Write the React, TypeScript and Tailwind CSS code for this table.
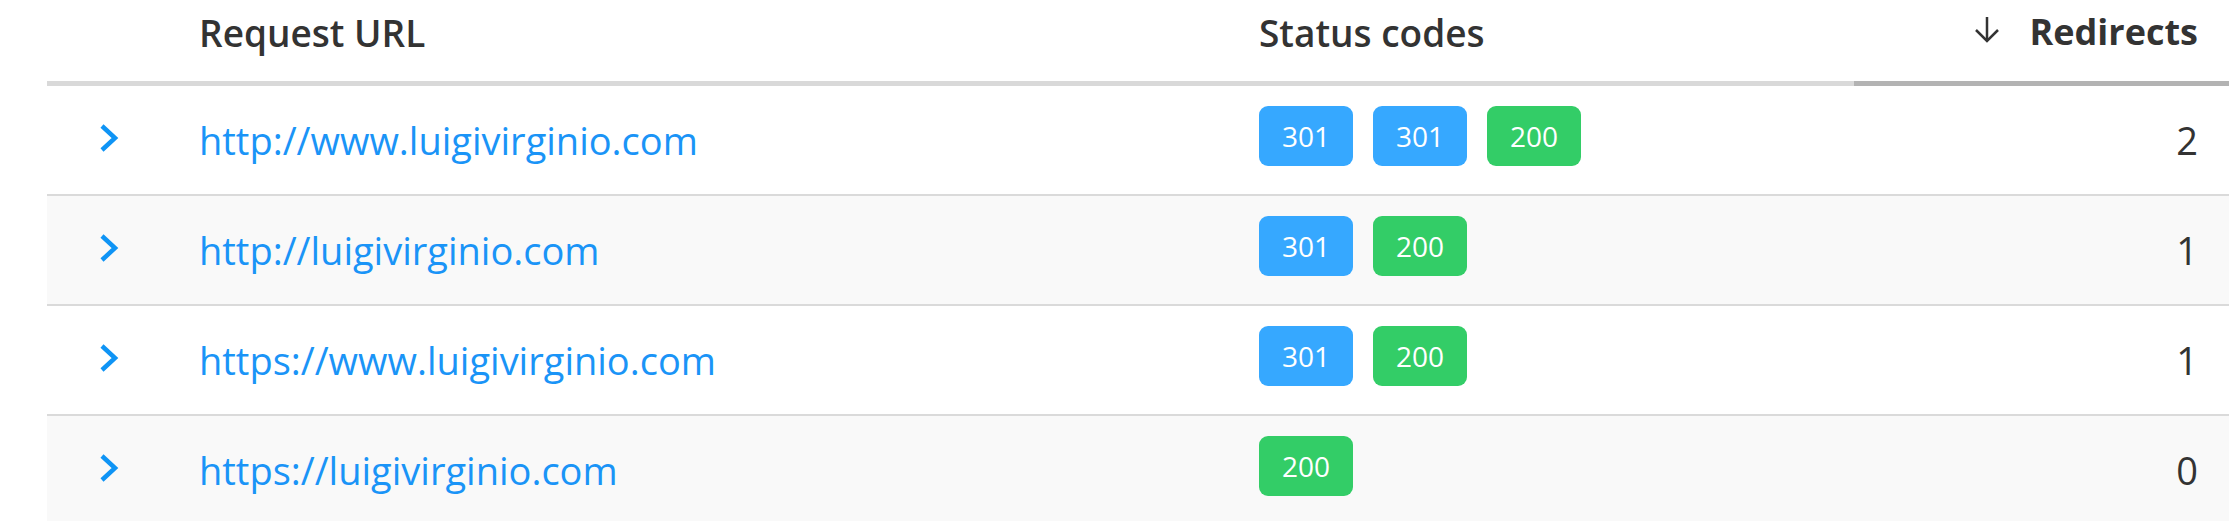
import React from 'react';

type Row = {
  url: string;
  codes: number[];
  redirects: number;
};

const rows: Row[] = [
  { url: 'http://www.luigivirginio.com', codes: [301, 301, 200], redirects: 2 },
  { url: 'http://luigivirginio.com', codes: [301, 200], redirects: 1 },
  { url: 'https://www.luigivirginio.com', codes: [301, 200], redirects: 1 },
  { url: 'https://luigivirginio.com', codes: [200], redirects: 0 },
];

const font = { fontFamily: '"Open Sans", "Noto Sans", sans-serif' };

function Chevron() {
  return (
    <svg width="20" height="28" viewBox="0 0 20 28" fill="none">
      <polyline points="3,2 16,14 3,26" stroke="#0f94f5" strokeWidth="4.5" strokeLinejoin="miter" />
    </svg>
  );
}

function ArrowDown() {
  return (
    <svg width="26" height="27" viewBox="0 0 26 27" fill="none">
      <line x1="13" y1="1" x2="13" y2="25" stroke="#333" strokeWidth="2.5" />
      <polyline points="2,14 13,25 24,14" stroke="#333" strokeWidth="2.5" />
    </svg>
  );
}

function Badge({ code }: { code: number }) {
  const color = code >= 300 ? 'bg-[#36a8ff]' : 'bg-[#33cd67]';
  return (
    <span className={`flex h-[60px] w-[94px] items-center justify-center rounded-[9px] text-[28px] leading-none text-white ${color}`}>
      {code}
    </span>
  );
}

export default function App() {
  return (
    <div className="bg-white pl-[47px] text-[#333]" style={font}>
      <div className="grid h-[86px] grid-cols-[152px_1060px_595px_1fr] text-[37px] leading-none">
        <div className="border-b-[5px] border-[#d9d9d9]" />
        <div className="border-b-[5px] border-[#d9d9d9] pt-[14px] font-semibold">Request URL</div>
        <div className="border-b-[5px] border-[#d9d9d9] pt-[14px] font-semibold">Status codes</div>
        <div className="flex items-start justify-end gap-[30px] border-b-[5px] border-[#b3b3b3] pr-[31px] pt-[16px]">
          <ArrowDown />
          <span className="-mt-[2px] text-[36px] font-bold">Redirects</span>
        </div>
      </div>
      {rows.map((row, i) => (
        <div
          key={row.url}
          className={`grid h-[110px] grid-cols-[152px_1060px_595px_1fr] items-center border-b-2 border-[#dadada] text-[38px] leading-none ${
            i % 2 === 1 ? 'bg-[#f9f9f9]' : 'bg-white'
          }`}
        >
          <div className="flex pb-[4px] pl-[52px]">
            <Chevron />
          </div>
          <div className="text-[#1a94f7]">{row.url}</div>
          <div className="flex gap-[20px] pb-[8px]">
            {row.codes.map((c, j) => (
              <Badge key={j} code={c} />
            ))}
          </div>
          <div className="pr-[31px] text-right">{row.redirects}</div>
        </div>
      ))}
    </div>
  );
}
